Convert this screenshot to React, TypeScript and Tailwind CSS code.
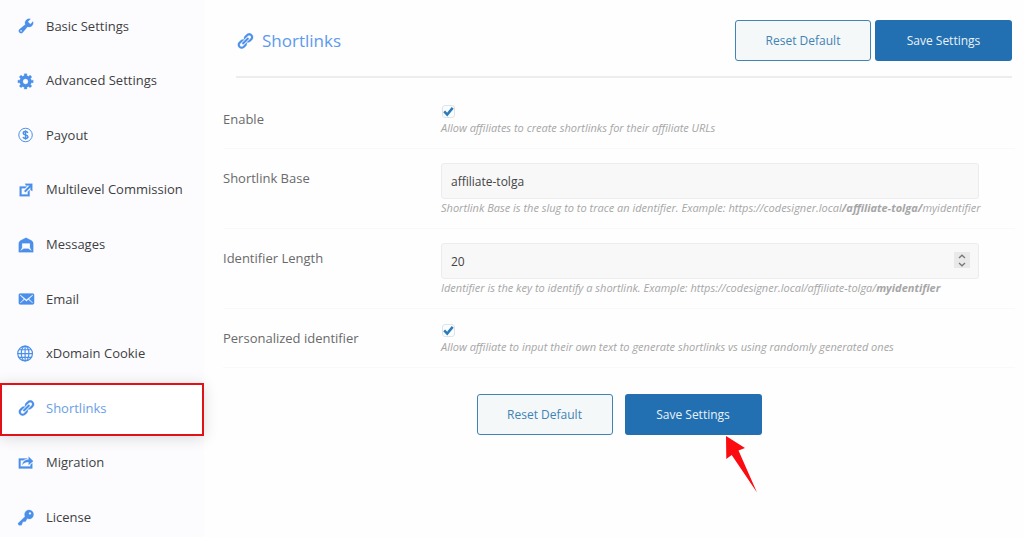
import { useState, type ReactNode } from "react";

const LINK =
  "M17.74 2.76c1.68 1.69 1.68 4.41 0 6.1l-1.53 1.52c-1.12 1.12-2.7 1.47-4.14 1.09l2.62-2.61.76-.77.76-.76c.84-.84.84-2.2 0-3.04-.84-.85-2.2-.85-3.04 0l-.77.76-3.38 3.38c-.37-1.44-.02-3.02 1.1-4.14l1.52-1.53c1.69-1.68 4.42-1.68 6.1 0zM8.59 13.43l5.34-5.34c.42-.42.42-1.1 0-1.52-.44-.43-1.13-.39-1.53 0l-5.33 5.34c-.42.42-.42 1.1 0 1.52.44.43 1.13.39 1.52 0zm-.76 2.29l4.14-4.15c.38 1.44.03 3.02-1.09 4.14l-1.52 1.53c-1.69 1.68-4.41 1.68-6.1 0-1.68-1.68-1.68-4.42 0-6.1l1.53-1.52c1.12-1.12 2.7-1.47 4.14-1.1l-4.14 4.15c-.85.84-.85 2.2 0 3.05.84.84 2.2.84 3.04 0z";

function Icon({ d, children }: { d?: string; children?: ReactNode }) {
  return (
    <svg viewBox="0 0 20 20" className="size-[18px] shrink-0 text-[#4a8fea]" fill="currentColor" aria-hidden="true">
      {d ? <path fillRule="evenodd" d={d} stroke="currentColor" strokeWidth="0.3" /> : children}
    </svg>
  );
}

const items: { label: string; icon: ReactNode }[] = [
  {
    label: "Basic Settings",
    icon: <Icon d="M16.68 9.77c-1.34 1.34-3.3 1.67-4.95.99l-5.41 6.52c-.99.99-2.59.99-3.58 0s-.99-2.59 0-3.57l6.52-5.42c-.68-1.65-.35-3.61.99-4.95 1.28-1.28 3.12-1.62 4.72-1.06l-2.89 2.89 2.82 2.82 2.86-2.87c.53 1.58.18 3.39-1.08 4.65zM3.81 16.21c.4.39 1.04.39 1.43 0 .4-.4.4-1.04 0-1.43-.39-.4-1.03-.4-1.43 0-.39.39-.39 1.03 0 1.43z" />,
  },
  {
    label: "Advanced Settings",
    icon: <Icon d="M18 12h-2.18c-.17.7-.44 1.35-.81 1.93l1.54 1.54-2.1 2.1-1.54-1.54c-.58.36-1.23.63-1.91.79V19H8v-2.18c-.68-.16-1.33-.43-1.91-.79l-1.54 1.54-2.12-2.12 1.54-1.54c-.36-.58-.63-1.23-.79-1.91H1V9.03h2.17c.16-.7.44-1.35.8-1.94L2.43 5.55l2.1-2.1 1.54 1.54c.58-.37 1.24-.64 1.93-.81V2h3v2.18c.68.16 1.33.43 1.91.79l1.54-1.54 2.12 2.12-1.54 1.54c.36.59.64 1.24.8 1.94H18V12zm-8.5 1.5c1.66 0 3-1.34 3-3s-1.34-3-3-3-3 1.34-3 3 1.34 3 3 3z" />,
  },
  {
    label: "Payout",
    icon: (
      <Icon>
        <g fill="none" stroke="currentColor">
          <circle cx="9.500" cy="10" r="7.500" strokeWidth="1.1" />
          <path strokeWidth="1.600" d="M12.100 7.600c-.4-.9-1.400-1.400-2.600-1.400-1.500 0-2.600.7-2.600 1.900 0 2.700 5.300 1.200 5.300 3.900 0 1.200-1.200 1.900-2.700 1.900-1.400 0-2.400-.6-2.800-1.600M9.500 4.600v10.800" />
        </g>
      </Icon>
    ),
  },
  {
    label: "Multilevel Commission",
    icon: <Icon d="M9 3h8v8l-2-1V6.92l-5.6 5.59-1.41-1.41L14.08 5H10zm3 12v-3l2-2v7H3V6h8L9 8H5v7h7z" />,
  },
  {
    label: "Messages",
    icon: <Icon d="M10 2 3.500 5.200C2.500 6 2 7 2 8.200V18h16V8.200c0-1.200-.5-2.200-1.500-3zM5.500 8h9v5l2 3.800-4-2.600h-5l-4 2.600 2-3.800z" />,
  },
  {
    label: "Email",
    icon: <Icon d="M19 14.5v-9c0-.83-.67-1.5-1.5-1.5H3.49c-.83 0-1.5.67-1.5 1.5v9c0 .83.67 1.5 1.5 1.5H17.5c.83 0 1.5-.67 1.5-1.5zm-1.31-9.11c.33.33.15.67-.03.84L13.6 9.95l3.9 4.06c.12.14.2.36.06.51-.13.16-.43.15-.56.05l-4.37-3.73-2.14 1.95-2.13-1.95-4.37 3.73c-.13.1-.43.11-.56-.05-.14-.15-.06-.37.06-.51l3.9-4.06-4.06-3.72c-.18-.17-.36-.51-.03-.84s.67-.17.95.07l6.24 5.04 6.25-5.04c.28-.24.62-.4.95-.07z" />,
  },
  {
    label: "xDomain Cookie",
    icon: (
      <Icon>
        <g fill="none" stroke="currentColor" strokeWidth="1.300">
          <circle cx="9" cy="9.500" r="8.200" />
          <ellipse cx="9" cy="9.500" rx="4.200" ry="8.200" />
          <path d="M9 1.300v16.400M.8 9.500h16.400M2.100 5.300h13.800M2.100 13.700h13.800" />
        </g>
      </Icon>
    ),
  },
  { label: "Shortlinks", icon: <Icon d={LINK} /> },
  {
    label: "Migration",
    icon: <Icon d="M18 8l-5 4V9.01c-2.58.06-4.88.45-7 2.99.29-3.57 2.66-5.66 7-5.94V3zM4 14h11v-2l2-1.6V16H2V5h9.43c-1.83.32-3.31 1-4.41 2H4v7z" />,
  },
  {
    label: "License",
    icon: <Icon d="M16.95 2.58c1.96 1.95 1.96 5.12 0 7.07-1.51 1.51-3.75 1.84-5.59 1.01l-1.87 3.31-2.99.31L5 18H2l-1-2 7.95-7.69c-.92-1.87-.62-4.18.93-5.73 1.95-1.96 5.12-1.96 7.07 0zm-2.51 3.79c.74 0 1.33-.6 1.33-1.34 0-.73-.59-1.33-1.33-1.33-.73 0-1.33.6-1.33 1.33 0 .74.6 1.34 1.33 1.34z" />,
  },
];

function ResetButton() {
  return (
    <button type="button" className="h-[41px] w-[136px] rounded-[3px] border border-[#4083b5] bg-[#f5f8f8] text-[12px] text-[#4083b5]">
      Reset Default
    </button>
  );
}

function SaveButton() {
  return (
    <button type="submit" className="h-[41px] w-[137px] rounded-[3px] bg-[#2270b1] text-[12px] text-[#e9f2f9]">
      Save Settings
    </button>
  );
}

function Row({ id, label, help, children }: { id: string; label: string; help: ReactNode; children: ReactNode }) {
  return (
    <div className="flex border-b border-[#f9f9f9] pt-[14px] pb-3">
      <label htmlFor={id} className="w-[218px] shrink-0 pt-[5px] text-[13px] leading-5 text-[#6a6a6a]">
        {label}
      </label>
      <div className="mr-9 min-w-0 flex-1">
        {children}
        <p className="text-[11px] leading-[17px] whitespace-nowrap text-[#a6a6a6] italic">{help}</p>
      </div>
    </div>
  );
}

function Check({ id }: { id: string }) {
  const [on, setOn] = useState(true);
  return (
    <div className="grid size-[15px] place-items-center">
      <input
        id={id}
        type="checkbox"
        checked={on}
        onChange={() => setOn(!on)}
        className="col-start-1 row-start-1 size-[13px] appearance-none rounded-[3px] border border-[#dce5e8] bg-[#fafdfe]"
      />
      {on && (
        <svg viewBox="0 0 13 13" className="pointer-events-none col-start-1 row-start-1 size-[13px]" aria-hidden="true">
          <path d="M2.200 6.300 5.200 9.600 10.700 2.900" fill="none" stroke="#2f7ab8" strokeWidth="2.500" />
        </svg>
      )}
    </div>
  );
}

const field = "block h-9 w-full rounded-[3px] border border-[#ececec] bg-[#f8f8f8] px-[9px] text-[12px] text-[#444]";

export default function App() {
  const [base, setBase] = useState("affiliate-tolga");
  const [length, setLength] = useState(20);

  return (
    <div className="flex min-h-screen bg-[#fefefe] font-['Open_Sans','Noto_Sans',sans-serif]">
      <aside className="h-screen w-[204px] shrink-0 bg-[#fcfcff]">
        <nav aria-label="Settings">
          <ul className="-mt-px grid h-[546px] grid-rows-10">
            {items.map(({ label, icon }) => {
              const active = label === "Shortlinks";
              return (
                <li
                  key={label}
                  className={
                    active
                      ? "mt-[2px] border-2 border-[#e01218] bg-white pr-[2px] pl-[15px] shadow-[0_2px_14px_rgba(0,0,0,0.14)]"
                      : "px-[17px]"
                  }
                >
                  <a
                    href="#"
                    className={
                      active
                        ? "flex h-full items-center gap-[11px] pb-[2px] text-[13px] whitespace-nowrap text-[#6a9ee6]"
                        : "flex h-full items-center gap-[11px] text-[13px] whitespace-nowrap text-[#3f3f3f]"
                    }
                  >
                    {icon}
                    {label}
                  </a>
                </li>
              );
            })}
          </ul>
        </nav>
      </aside>

      <main className="min-w-0 flex-1 pl-[19px]">
        <form onSubmit={(e) => e.preventDefault()}>
          <header className="mr-3 mb-3 ml-[13px] flex items-center border-b-2 border-[#ededed] pt-5 pb-[15px]">
            <h1 className="flex items-center gap-2 text-[17px] text-[#5c9aee]">
              <Icon d={LINK} />
              Shortlinks
            </h1>
            <div className="ml-auto flex gap-1">
              <ResetButton />
              <SaveButton />
            </div>
          </header>

          <div className="mr-[9px]">
            <Row id="enable" label="Enable" help="Allow affiliates to create shortlinks for their affiliate URLs">
              <Check id="enable" />
            </Row>
            <Row
              id="base"
              label="Shortlink Base"
              help={
                <>
                  Shortlink Base is the slug to to trace an identifier. Example: https://codesigner.local<b>/affiliate-tolga/</b>myidentifier
                </>
              }
            >
              <input id="base" type="text" value={base} onChange={(e) => setBase(e.target.value)} className={field} />
            </Row>
            <Row
              id="length"
              label="Identifier Length"
              help={
                <>
                  Identifier is the key to identify a shortlink. Example: https://codesigner.local/affiliate-tolga/<b>myidentifier</b>
                </>
              }
            >
              <div className="relative">
                <input
                  id="length"
                  type="number"
                  value={length}
                  onChange={(e) => setLength(Number(e.target.value))}
                  className={`${field} [appearance:textfield] [&::-webkit-inner-spin-button]:appearance-none`}
                />
                <div className="absolute top-[9px] right-[9px] flex h-4 w-4 flex-col bg-[#e9e9e9] text-[#777]">
                  <button type="button" aria-label="Increase" onClick={() => setLength(length + 1)} className="flex h-2 items-center justify-center">
                    <svg viewBox="0 0 8 5" className="h-[5px] w-2" fill="none" stroke="currentColor" strokeWidth="1.300">
                      <path d="M1 4 4 1.200 7 4" />
                    </svg>
                  </button>
                  <button type="button" aria-label="Decrease" onClick={() => setLength(length - 1)} className="flex h-2 items-center justify-center">
                    <svg viewBox="0 0 8 5" className="h-[5px] w-2" fill="none" stroke="currentColor" strokeWidth="1.300">
                      <path d="M1 1 4 3.800 7 1" />
                    </svg>
                  </button>
                </div>
              </div>
            </Row>
            <Row
              id="personalized"
              label="Personalized identifier"
              help="Allow affiliate to input their own text to generate shortlinks vs using randomly generated ones"
            >
              <Check id="personalized" />
            </Row>

            <div className="flex justify-center gap-3 pt-[26px]">
              <ResetButton />
              <div className="relative">
                <SaveButton />
                <svg viewBox="0 0 32 58" className="pointer-events-none absolute top-[41px] left-[100px] h-[58px] w-8" aria-hidden="true">
                  <path d="M1 1 20 13 13.500 15.500 32 57.500 6.700 20 1.300 24z" fill="#fb0a10" />
                </svg>
              </div>
            </div>
          </div>
        </form>
      </main>
    </div>
  );
}
